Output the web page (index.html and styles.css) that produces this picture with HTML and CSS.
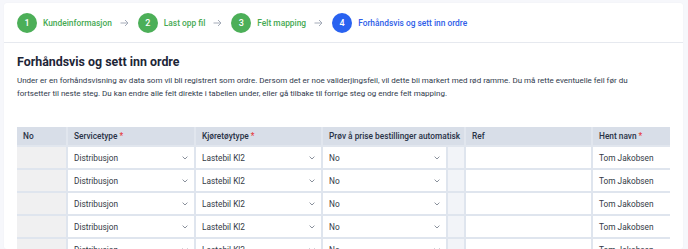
FILE: index.html
```html
<!DOCTYPE html>
<html lang="no">
<head>
<meta charset="utf-8">
<title>Forhåndsvis og sett inn ordre</title>
<link rel="stylesheet" href="styles.css">
</head>
<body>
<div class="card">
  <nav class="steps">
    <div class="step done"><span class="num">1</span><span class="label">Kundeinformasjon</span></div>
    <span class="arrow"><svg width="9" height="8" viewBox="0 0 9 8"><path d="M0.5 4H8M5 1l3 3-3 3" fill="none" stroke="currentColor" stroke-width="1"/></svg></span>
    <div class="step done"><span class="num">2</span><span class="label">Last opp fil</span></div>
    <span class="arrow"><svg width="9" height="8" viewBox="0 0 9 8"><path d="M0.5 4H8M5 1l3 3-3 3" fill="none" stroke="currentColor" stroke-width="1"/></svg></span>
    <div class="step done"><span class="num">3</span><span class="label">Felt mapping</span></div>
    <span class="arrow"><svg width="9" height="8" viewBox="0 0 9 8"><path d="M0.5 4H8M5 1l3 3-3 3" fill="none" stroke="currentColor" stroke-width="1"/></svg></span>
    <div class="step active"><span class="num">4</span><span class="label">Forhåndsvis og sett inn ordre</span></div>
  </nav>
  <section class="content">
    <h1 class="title">Forhåndsvis og sett inn ordre</h1>
    <p class="intro">Under er en forhåndsvisning av data som vil bli registrert som ordre. Dersom det er noe validerjingsfeil, vil dette bli markert med rød ramme. Du må rette eventuelle feil før du fortsetter til neste steg. Du kan endre alle felt direkte i tabellen under, eller gå tilbake til forrige steg og endre felt mapping.</p>
    <div class="table-wrap">
      <table class="grid">
        <colgroup>
          <col class="c-no"><col class="c-svc"><col class="c-veh"><col class="c-auto"><col class="c-gap"><col class="c-ref"><col class="c-name">
        </colgroup>
        <thead>
          <tr>
            <th>No</th>
            <th>Servicetype <span class="req">*</span></th>
            <th>Kjøretøytype <span class="req">*</span></th>
            <th colspan="2">Prøv å prise bestillinger automatisk</th>
            <th>Ref</th>
            <th>Hent navn <span class="req">*</span></th>
          </tr>
        </thead>
        <tbody id="rows"></tbody>
      </table>
    </div>
  </section>
</div>
<script>
  var chev = '<svg class="chev" width="6" height="4" viewBox="0 0 6 4"><path d="M0.6 0.6L3 3 5.4 0.6" fill="none" stroke="currentColor" stroke-width="1"/></svg>';
  var html = '';
  for (var i = 0; i < 5; i++) {
    html += '<tr>' +
      '<td class="no"></td>' +
      '<td class="sel"><div class="select"><span>Distribusjon</span>' + chev + '</div></td>' +
      '<td class="sel"><div class="select"><span>Lastebil Kl2</span>' + chev + '</div></td>' +
      '<td class="sel"><div class="select"><span>No</span>' + chev + '</div></td>' +
      '<td class="gap"></td>' +
      '<td class="txt"></td>' +
      '<td class="txt">Tom Jakobsen</td>' +
      '</tr>';
  }
  document.getElementById('rows').innerHTML = html;
</script>
</body>
</html>
```

FILE: styles.css
```css
* { box-sizing: border-box; }
html, body { margin: 0; padding: 0; }
body {
  background: #f6f7fb;
  font-family: Roboto, "Liberation Sans", sans-serif;
  color: #2c3648;
  width: 688px;
  height: 249px;
  overflow: hidden;
  padding: 3px 5px 0 4px;
}
.card {
  background: #fff;
  border-radius: 3px;
  height: 246px;
  overflow: hidden;
  box-shadow: 0 0 2px rgba(20, 30, 60, 0.04);
}
.steps {
  height: 40px;
  display: flex;
  align-items: center;
  padding-left: 13px;
  border-bottom: 1px solid #e6e9ef;
}
.step { display: flex; align-items: center; gap: 6px; }
.num {
  width: 20px; height: 20px;
  border-radius: 50%;
  display: flex; align-items: center; justify-content: center;
  color: #fff;
  font-size: 9px;
  font-weight: 500;
}
.label { font-size: 8.4px; font-weight: 500; }
.done .num { background: #4caf58; }
.done .label { color: #45a952; }
.active .num { background: #2962f0; }
.active .label { color: #2e5de8; }
.arrow { color: #a4abb8; display: flex; margin: 0 9px 0 8px; }
.content { padding: 10px 13px 0 13px; }
.title {
  margin: 0;
  font-size: 12.4px;
  font-weight: 700;
  color: #1d2537;
  line-height: 18px;
}
.intro {
  margin: 3px 0 0 0;
  font-size: 8px;
  line-height: 13px;
  color: #303a4c;
  width: 645px;
}
.table-wrap { margin-top: 27px; overflow: hidden; width: 653px; }
.grid {
  border-collapse: collapse;
  table-layout: fixed;
  width: 720px;
  font-size: 8.3px;
}
.c-no { width: 50px; }
.c-svc { width: 128px; }
.c-veh { width: 127px; }
.c-auto { width: 125px; }
.c-gap { width: 18px; }
.c-ref { width: 127px; }
.c-name { width: 145px; }
.grid th {
  background: #d8dee8;
  text-align: left;
  font-weight: 500;
  color: #283246;
  height: 19px;
  padding: 0 6px;
  border: 2px solid #e1e6ee;
  border-top: 0;
  white-space: nowrap;
  overflow: hidden;
}
.grid th:first-child { border-left: 0; }
.req { color: #e53b3b; }
.grid td {
  height: 23px;
  border: 2px solid #dfe5ee;
  padding: 0;
  color: #333a46;
  white-space: nowrap;
}
.grid td:first-child { border-left: 0; }
.grid td.no { background: #f0f0f1; }
.grid td.gap { background: #f2f4f8; }
.grid td.txt { padding: 0 6px; }
.select {
  display: flex;
  align-items: center;
  justify-content: space-between;
  padding: 0 6px 0 6px;
  height: 100%;
}
.chev { color: #8a919c; }
```
